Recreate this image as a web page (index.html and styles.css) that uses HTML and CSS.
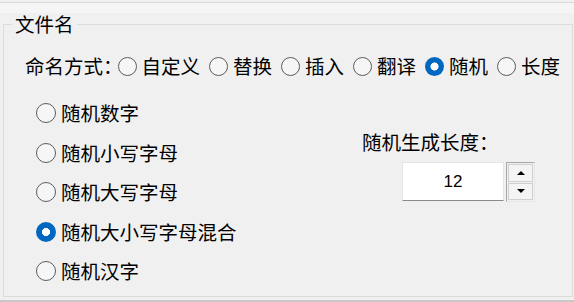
FILE: index.html
```html
<!DOCTYPE html>
<html lang="zh-CN">
<head>
<meta charset="utf-8">
<title>文件名</title>
<link rel="stylesheet" href="styles.css">
</head>
<body>
<div class="topstrip"></div>
<fieldset class="group">
  <legend class="legend">文件名</legend>
  <div class="mode-row">
    <span class="mode-label">命名方式：</span>
    <label class="opt"><span class="radio"></span><span>自定义</span></label>
    <label class="opt"><span class="radio"></span><span>替换</span></label>
    <label class="opt"><span class="radio"></span><span>插入</span></label>
    <label class="opt"><span class="radio"></span><span>翻译</span></label>
    <label class="opt"><span class="radio checked"></span><span>随机</span></label>
    <label class="opt"><span class="radio"></span><span>长度</span></label>
  </div>
  <div class="body">
    <div class="choices">
      <label class="opt"><span class="radio"></span><span>随机数字</span></label>
      <label class="opt"><span class="radio"></span><span>随机小写字母</span></label>
      <label class="opt"><span class="radio"></span><span>随机大写字母</span></label>
      <label class="opt"><span class="radio checked"></span><span>随机大小写字母混合</span></label>
      <label class="opt"><span class="radio"></span><span>随机汉字</span></label>
    </div>
    <div class="length">
      <div class="length-label">随机生成长度：</div>
      <div class="spin">
        <div class="spin-value">12</div>
        <div class="spin-buttons">
          <div class="spin-btn"><span class="tri-up"></span></div>
          <div class="spin-btn"><span class="tri-down"></span></div>
        </div>
      </div>
    </div>
  </div>
</fieldset>
</body>
</html>
```

FILE: styles.css
```css
html, body {
  margin: 0;
  padding: 0;
  background: #f0f0f0;
  width: 574px;
  height: 302px;
  overflow: hidden;
}
body {
  font-family: "Noto Sans CJK SC", "Noto Sans", sans-serif;
  font-size: 19.5px;
  color: #000;
  border-bottom: 2px solid #c8c8c8;
  box-sizing: border-box;
}
.topstrip {
  margin-top: 2px;
  height: 10px;
  border-top: 1px solid #dadada;
  background: #f5f5f5;
}
.group {
  margin: 0 0 0 3px;
  width: 570px;
  height: 284px;
  box-sizing: border-box;
  padding: 0;
  border: 1px solid #dcdcdc;
}
.legend {
  margin-left: 8px;
  padding: 0 3px;
  line-height: 22px;
  height: 22px;
}
.mode-row {
  display: flex;
  align-items: center;
  height: 24px;
  line-height: 24px;
  margin-top: 19px;
  padding-left: 21px;
}
.mode-label {
  margin-right: -5px;
}
.opt {
  display: flex;
  align-items: center;
  gap: 5px;
  height: 24px;
  line-height: 24px;
  white-space: nowrap;
}
.mode-row .opt {
  margin-right: 9px;
}
.radio {
  width: 19px;
  height: 19px;
  box-sizing: border-box;
  border-radius: 50%;
  border: 1.5px solid #5c5c5c;
  background: #f6f6f6;
  flex: none;
}
.radio.checked {
  border: none;
  background: radial-gradient(circle, #fff 0 3.8px, #0067c0 4.3px);
}
.body {
  display: flex;
  margin-top: 23px;
}
.choices {
  width: 358px;
  box-sizing: border-box;
  padding-left: 32px;
  display: flex;
  flex-direction: column;
  gap: 15.5px;
}
.choices .opt {
  gap: 5px;
}
.choices .radio {
  width: 20px;
  height: 20px;
}
.length {
  padding-top: 29px;
}
.length-label {
  line-height: 24px;
  height: 24px;
}
.spin {
  display: flex;
  margin-top: 8px;
  margin-left: 40px;
  height: 40px;
}
.spin-value {
  width: 102px;
  height: 39px;
  box-sizing: border-box;
  background: #fff;
  border: 1px solid #e6e6e6;
  border-bottom: 1px solid #8a8a8a;
  font-family: "Liberation Sans", Arial, sans-serif;
  font-size: 17px;
  line-height: 37px;
  text-align: center;
}
.spin-buttons {
  margin-left: 2px;
  width: 29px;
  height: 40px;
  box-sizing: border-box;
  border: 1px solid #a8a8a8;
  border-right-color: #e8e8e8;
  border-bottom-color: #e8e8e8;
  background: #f0f0f0;
  display: flex;
  flex-direction: column;
  padding: 1px;
  gap: 1px;
}
.spin-btn {
  flex: 1;
  display: flex;
  align-items: center;
  justify-content: center;
  background: #f4f4f4;
  border: 1px solid #d0d0d0;
}
.tri-up {
  width: 0;
  height: 0;
  border-left: 4px solid transparent;
  border-right: 4px solid transparent;
  border-bottom: 4px solid #000;
}
.tri-down {
  width: 0;
  height: 0;
  border-left: 4px solid transparent;
  border-right: 4px solid transparent;
  border-top: 4px solid #000;
}
```
